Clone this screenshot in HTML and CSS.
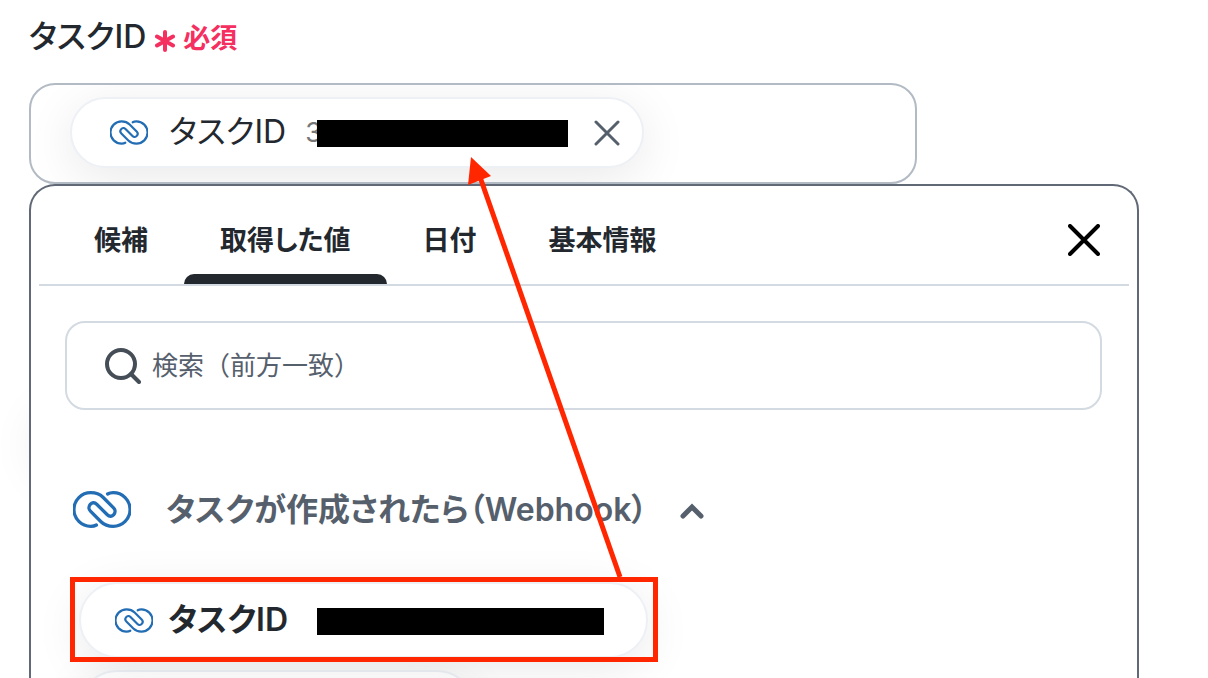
FILE: index.html
```
<!DOCTYPE html>
<html lang="ja">
<head>
    <meta charset="UTF-8">
    <meta name="viewport" content="width=device-width, initial-scale=1.0">
    <title>タスクID</title>
    <link rel="stylesheet" href="styles.css">
</head>
<body>
    <!-- shared logo shape -->
    <svg class="defs" aria-hidden="true">
        <symbol id="logo" viewBox="0 0 174 112">
            <path d="M70 103C65 106 59 107 53 107A51 51 0 0 1 53 5C68 5 80 9 90 19L122 51C135 64 117 86 103 72L71 40C57 26 39 48 52 61L84 93C94 103 106 107 121 107A51 51 0 0 0 121 5C115 5 109 6 104 9" fill="none" stroke="#226db4" stroke-width="10" stroke-linecap="round"/>
        </symbol>
    </svg>

    <main class="form">
        <div class="label">
            <span class="label-name">タスクID</span>
            <svg class="asterisk" viewBox="0 0 20 22" aria-hidden="true">
                <path d="M10 2v18M2 6.500l16 9M18 6.500l-16 9"/>
            </svg>
            <span class="required">必須</span>
        </div>

        <div class="field">
            <div class="chip">
                <svg class="logo-small" aria-hidden="true"><use href="#logo"/></svg>
                <span class="chip-name">タスクID</span>
                <span class="chip-value">3</span>
                <span class="mask"></span>
                <button class="remove" type="button" aria-label="削除">
                    <svg viewBox="0 0 26 26"><path d="M2 2l22 22M24 2L2 24"/></svg>
                </button>
            </div>
        </div>

        <section class="panel">
            <div class="tabs">
                <button class="tab" type="button">候補</button>
                <button class="tab active" type="button">取得した値</button>
                <button class="tab" type="button">日付</button>
                <button class="tab" type="button">基本情報</button>
                <button class="close" type="button" aria-label="閉じる">
                    <svg viewBox="0 0 32 32"><path d="M2 2l28 28M30 2L2 30"/></svg>
                </button>
            </div>

            <label class="search">
                <svg viewBox="0 0 36 36" aria-hidden="true">
                    <circle cx="16" cy="16" r="14"/>
                    <path d="M26 26l8 8"/>
                </svg>
                <input type="text" placeholder="検索（前方一致）" aria-label="検索（前方一致）">
            </label>

            <button class="source" type="button">
                <svg class="logo-large" aria-hidden="true"><use href="#logo"/></svg>
                <span class="source-name">タスクが作成されたら（Webhook）</span>
                <svg class="chevron" viewBox="0 0 24 16" aria-hidden="true"><path d="M3 13L12 4l9 9"/></svg>
            </button>

            <div class="options">
                <button class="option highlighted" type="button">
                    <svg class="logo-small" aria-hidden="true"><use href="#logo"/></svg>
                    <span class="option-name">タスクID</span>
                    <span class="mask"></span>
                </button>
                <button class="option next" type="button" aria-label="次の項目"></button>
            </div>
        </section>

        <svg class="arrow" viewBox="0 0 160 424" aria-hidden="true">
            <path d="M17 20L157 420" fill="none" stroke="#ff2600" stroke-width="5"/>
            <path d="M8 0L5 28L28 19Z" fill="#ff2600"/>
        </svg>
    </main>
</body>
</html>
```
FILE: styles.css
```
* {
    box-sizing: border-box;
}
body {
    margin: 0;
    font-family: Inter, "Noto Sans CJK JP", sans-serif;
    font-feature-settings: "palt";
    color: #23282f;
    background-color: #fff;
}
button {
    padding: 0;
    border: 0;
    background: none;
    font: inherit;
    font-feature-settings: inherit;
    color: inherit;
    cursor: pointer;
}
svg {
    display: block;
    flex: none;
}
.defs {
    position: absolute;
    width: 0;
    height: 0;
}
.form {
    position: relative;
    display: flex;
    flex-direction: column;
    height: 100vh;
    padding: 16px 69px 0 29px;
    overflow: hidden;
}
.label {
    display: flex;
    align-items: center;
    height: 40px;
    margin-bottom: 27px;
}
.label-name {
    padding-bottom: 4px;
    font-size: 32px;
    font-weight: 500;
}
.asterisk {
    width: 20px;
    height: 22px;
    margin: 10px 8px 0 9px;
}
.asterisk path {
    fill: none;
    stroke: #f52f5f;
    stroke-width: 4;
    stroke-linecap: round;
}
.required {
    font-size: 27px;
    font-weight: 600;
    color: #f52f5f;
}
.field {
    flex: none;
    width: 80%;
    height: 101px;
    padding: 12px 39px;
    border: 2px solid #b2bac4;
    border-radius: 26px;
    overflow: hidden;
}
.chip,
.option {
    display: flex;
    align-items: center;
    border: 2px solid #edf0f5;
    background-color: #fff;
    box-shadow: 0 10px 50px rgba(0, 0, 0, 0.09);
}
.chip {
    width: 574px;
    height: 71px;
    padding: 0 22px 0 38px;
    border-radius: 36px;
}
.logo-small {
    width: 38px;
    height: 25px;
}
.chip-name,
.option-name {
    padding-bottom: 7px;
}
.chip-name {
    margin-left: 21px;
    font-size: 32px;
}
.chip-value {
    margin-left: 19px;
    font-size: 27px;
    color: #777;
}
.mask {
    position: relative;
    height: 27px;
    margin-top: 2px;
    background-color: #000;
}
.chip .mask {
    width: 251px;
    margin-left: -5px;
}
.remove {
    margin-left: auto;
}
.remove svg {
    width: 26px;
    height: 26px;
    fill: none;
    stroke: #56606c;
    stroke-width: 3;
    stroke-linecap: round;
}
.panel {
    flex: 1;
    min-height: 500px;
    padding: 0 8px;
    border: 2px solid #606975;
    border-bottom: 0;
    border-radius: 26px 26px 0 0;
    background-color: #fff;
}
.form::before {
    content: "";
    position: absolute;
    z-index: -1;
    left: 36px;
    top: 400px;
    width: 200px;
    height: 70px;
    border-radius: 35px;
    box-shadow: 0 10px 50px rgba(0, 0, 0, 0.09);
}
.tabs {
    display: flex;
    height: 100px;
    padding: 0 29px 0 19px;
    border-bottom: 2px solid #d4dae1;
}
.tab {
    position: relative;
    padding: 6px 36px 0;
    font-size: 27px;
    font-weight: 600;
    white-space: nowrap;
}
.tab.active::after {
    content: "";
    position: absolute;
    left: 0;
    right: 0;
    bottom: 0;
    height: 10px;
    border-radius: 10px 10px 0 0;
    background-color: #23282f;
}
.close {
    margin: 10px 0 0 auto;
}
.close svg {
    width: 32px;
    height: 32px;
    fill: none;
    stroke: #000;
    stroke-width: 4;
    stroke-linecap: round;
}
.search {
    display: flex;
    align-items: center;
    gap: 9px;
    height: 89px;
    margin: 35px 27px 0 26px;
    padding: 0 38px;
    border: 2px solid #d4dae1;
    border-radius: 20px;
}
.search svg {
    width: 36px;
    height: 36px;
    fill: none;
    stroke: #454d57;
    stroke-width: 4;
    stroke-linecap: round;
}
.search input {
    flex: 1;
    min-width: 0;
    border: 0;
    outline: 0;
    background: none;
    font: inherit;
    font-feature-settings: normal;
    font-size: 26px;
}
.search input::placeholder {
    color: #56606c;
    opacity: 1;
}
.source {
    display: flex;
    align-items: center;
    height: 48px;
    margin: 75px 0 0 34px;
    font-size: 32px;
    font-weight: 600;
    color: #56606c;
    white-space: nowrap;
}
.source-name {
    padding-bottom: 4px;
}
.logo-large {
    width: 58px;
    height: 37px;
    margin-right: 35px;
}
.chevron {
    width: 24px;
    height: 16px;
    margin: 4px 0 0 33px;
    fill: none;
    stroke: #56606c;
    stroke-width: 5;
    stroke-linecap: round;
}
.options {
    display: flex;
    flex-direction: column;
    gap: 12px;
    margin: 49px 0 0 40px;
}
.option {
    width: 569px;
    height: 76px;
    padding: 0 34px;
    border-radius: 38px;
    font-size: 32px;
    font-weight: 600;
}
.option-name {
    margin-left: 15px;
}
.option .mask {
    width: 287px;
    margin-left: 29px;
}
.option.next {
    width: 396px;
}
/* highlight frame drawn round the option */
.highlighted {
    position: relative;
}
.highlighted::after {
    content: "";
    position: absolute;
    z-index: 1;
    inset: -7px -12px -6px -11px;
    border: 5px solid #ff2600;
}
.arrow {
    position: absolute;
    left: 463px;
    top: 157px;
    width: 160px;
    height: 424px;
}
```
